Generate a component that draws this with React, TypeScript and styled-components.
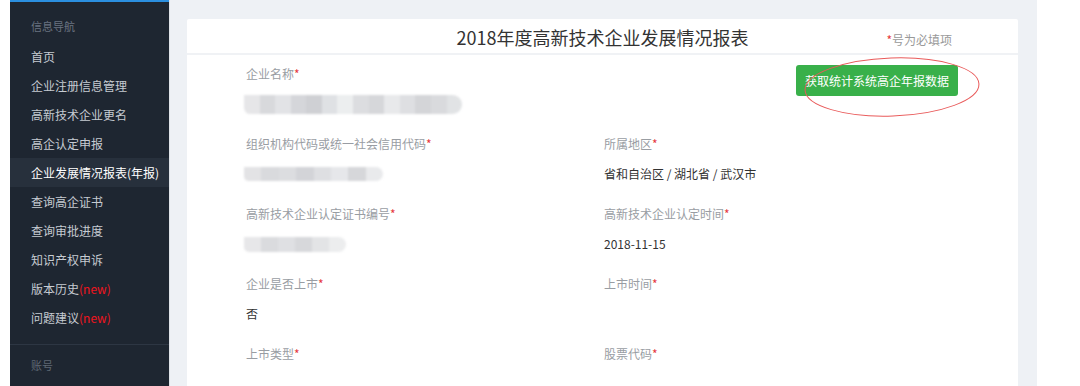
import React from "react";
import styled, { createGlobalStyle } from "styled-components";

const Global = createGlobalStyle`
  html, body { margin: 0; padding: 0; background: #fff; }
  body { font-family: "Noto Sans CJK SC", "Liberation Sans", sans-serif; }
  * { box-sizing: border-box; }
`;

const Page = styled.div`
  display: flex;
  width: 1080px;
  height: 386px;
  overflow: hidden;
  background: #fff;
`;

const LeftGap = styled.div`
  width: 10px;
  flex: none;
`;

const Sidebar = styled.nav`
  width: 159px;
  flex: none;
  background: #1e2631;
  border-top: 2px solid #2b8fe0;
  display: flex;
  flex-direction: column;
`;

const SectionTitle = styled.div`
  height: 40px;
  padding: 16px 0 0 21px;
  font-size: 11px;
  line-height: 16px;
  color: #6a7380;
`;

const NavItem = styled.div<{ $active?: boolean }>`
  height: 29px;
  line-height: 29px;
  padding-left: 21px;
  font-size: 12px;
  color: ${(p) => (p.$active ? "#ffffff" : "#c6cbd2")};
  background: ${(p) => (p.$active ? "#27303c" : "transparent")};
  white-space: nowrap;
`;

const New = styled.span`
  color: #f0141e;
`;

const Divider = styled.div`
  height: 1px;
  background: #2d3643;
  margin-top: 12px;
`;

const AccountTitle = styled.div`
  padding: 12px 0 0 21px;
  font-size: 11px;
  line-height: 16px;
  color: #5f6874;
`;

const Main = styled.main`
  width: 868px;
  flex: none;
  background: #eef1f5;
  border-left: 1px solid #dfe3e8;
  padding: 19px 19px 0 17px;
`;

const Card = styled.section`
  position: relative;
  background: #fff;
  height: 400px;
  border-radius: 2px;
`;

const CardHeader = styled.header`
  position: relative;
  height: 36px;
  border-bottom: 2px solid #f0f2f5;
  display: flex;
  align-items: center;
  justify-content: center;
`;

const Title = styled.h1`
  margin: 0;
  font-size: 18px;
  font-weight: 400;
  color: #333;
  line-height: 24px;
  margin-top: 2px;
`;

const Hint = styled.span`
  position: absolute;
  right: 66px;
  top: 13px;
  font-size: 12px;
  color: #999;
  line-height: 16px;
`;

const Star = styled.span`
  color: #e6393d;
`;

const Form = styled.div`
  display: grid;
  grid-template-columns: 358px 358px;
  padding: 10px 0 0 59px;
`;

const Field = styled.div`
  height: 70px;
  display: flex;
  flex-direction: column;
`;

const ButtonCell = styled.div`
  height: 70px;
  display: flex;
  justify-content: flex-end;
  padding-right: 4px;
`;

const Label = styled.div`
  font-size: 12px;
  line-height: 18px;
  color: #999da3;
`;

const Value = styled.div`
  margin-top: 12px;
  font-size: 12px;
  line-height: 18px;
  height: 18px;
  color: #333;
  display: flex;
  align-items: center;
`;

const Blur = styled.div<{ $w: number; $h: number }>`
  width: ${(p) => p.$w}px;
  height: ${(p) => p.$h}px;
  margin-left: -2px;
  display: flex;
  border-radius: 0 ${(p) => p.$h / 2}px ${(p) => p.$h / 2}px ${(p) => p.$h / 3}px;
  overflow: hidden;
  filter: blur(0.8px);
`;

const Cell = styled.div`
  flex: 1;
  height: 100%;
`;

const GreenButton = styled.button`
  height: 31px;
  width: 162px;
  border: none;
  border-radius: 3px;
  background: #39b04a;
  color: #fff;
  font-family: inherit;
  font-size: 12px;
  padding: 0;
`;

const Annotation = styled.svg`
  position: absolute;
  left: 610px;
  top: 36px;
  pointer-events: none;
`;

const RightGap = styled.div`
  flex: 1;
  background: #fff;
`;

const navItems: { text: string; isNew?: boolean; active?: boolean }[] = [
  { text: "首页" },
  { text: "企业注册信息管理" },
  { text: "高新技术企业更名" },
  { text: "高企认定申报" },
  { text: "企业发展情况报表(年报)", active: true },
  { text: "查询高企证书" },
  { text: "查询审批进度" },
  { text: "知识产权申诉" },
  { text: "版本历史", isNew: true },
  { text: "问题建议", isNew: true },
];

const Mosaic: React.FC<{ w: number; h: number; colors: string[] }> = ({ w, h, colors }) => (
  <Blur $w={w} $h={h}>
    {colors.map((c, i) => (
      <Cell key={i} style={{ background: c }} />
    ))}
  </Blur>
);

const Req = () => <Star>*</Star>;

export default function App() {
  return (
    <>
      <Global />
      <Page>
        <LeftGap />
        <Sidebar>
          <SectionTitle>信息导航</SectionTitle>
          {navItems.map((it) => (
            <NavItem key={it.text} $active={it.active}>
              {it.text}
              {it.isNew && <New>(new)</New>}
            </NavItem>
          ))}
          <Divider />
          <AccountTitle>账号</AccountTitle>
        </Sidebar>
        <Main>
          <Card>
            <CardHeader>
              <Title>2018年度高新技术企业发展情况报表</Title>
              <Hint>
                <Star>*</Star>号为必填项
              </Hint>
            </CardHeader>
            <Form>
              <Field>
                <Label>
                  企业名称<Req />
                </Label>
                <Value>
                  <Mosaic
                    w={218}
                    h={19}
                    colors={[
                      "#e6e6e8",
                      "#d8d9dc",
                      "#e2e3e6",
                      "#d5d6da",
                      "#cfd0d4",
                      "#dfe1e4",
                      "#eceeef",
                      "#dcdde0",
                      "#d6d7da",
                      "#e8e9eb",
                      "#dedfe2",
                      "#d4d5d8",
                      "#d9dadd",
                      "#e1e3e5",
                    ]}
                  />
                </Value>
              </Field>
              <ButtonCell>
                <GreenButton>获取统计系统高企年报数据</GreenButton>
              </ButtonCell>

              <Field>
                <Label>
                  组织机构代码或统一社会信用代码<Req />
                </Label>
                <Value>
                  <Mosaic
                    w={139}
                    h={14}
                    colors={["#e3e3e5", "#d9dadd", "#dcdde0", "#d3d4d8", "#dedfe2", "#e6e7ea", "#d6d7da", "#e9eaec"]}
                  />
                </Value>
              </Field>
              <Field>
                <Label>
                  所属地区<Req />
                </Label>
                <Value>省和自治区 / 湖北省 / 武汉市</Value>
              </Field>

              <Field>
                <Label>
                  高新技术企业认定证书编号<Req />
                </Label>
                <Value>
                  <Mosaic
                    w={102}
                    h={15}
                    colors={["#e7e7e9", "#dadbde", "#dfe0e3", "#d7d8db", "#e3e4e6", "#ecedee"]}
                  />
                </Value>
              </Field>
              <Field>
                <Label>
                  高新技术企业认定时间<Req />
                </Label>
                <Value>2018-11-15</Value>
              </Field>

              <Field>
                <Label>
                  企业是否上市<Req />
                </Label>
                <Value>否</Value>
              </Field>
              <Field>
                <Label>
                  上市时间<Req />
                </Label>
                <Value />
              </Field>

              <Field>
                <Label>
                  上市类型<Req />
                </Label>
                <Value />
              </Field>
              <Field>
                <Label>
                  股票代码<Req />
                </Label>
                <Value />
              </Field>
            </Form>
            <Annotation width="190" height="70" viewBox="0 0 190 70">
              <ellipse
                cx="95"
                cy="32"
                rx="87"
                ry="29"
                fill="none"
                stroke="#e95a5a"
                strokeWidth="1"
                transform="rotate(-2 95 32)"
              />
            </Annotation>
          </Card>
        </Main>
        <RightGap />
      </Page>
    </>
  );
}
